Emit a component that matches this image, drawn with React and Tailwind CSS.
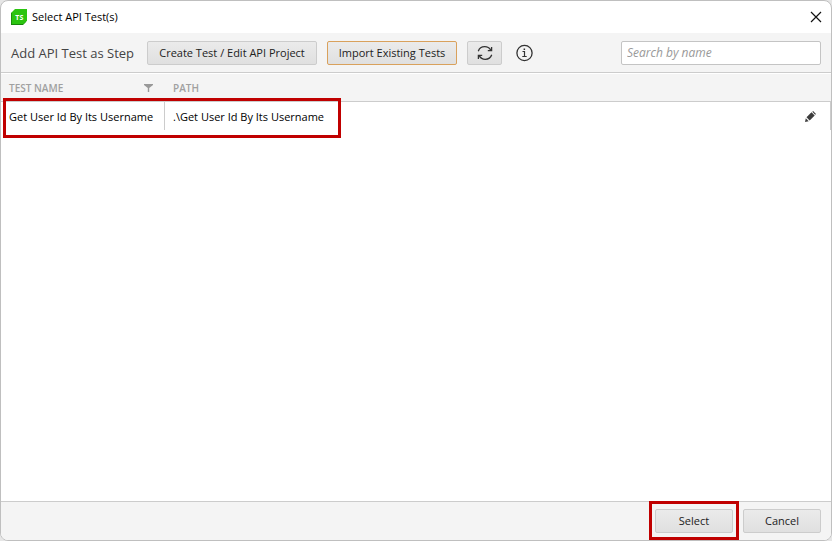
const buttonBase =
  "flex h-6 items-center justify-center whitespace-nowrap rounded-xs border bg-linear-to-b from-[#ebebeb] to-[#e0e0e0] text-[11px] leading-4 text-[#222222]";

function Logo() {
  return (
    <svg className="size-4 shrink-0" viewBox="0 0 16 16" aria-hidden="true">
      <path d="M0 3.500V16h12l3.500-3.500Z" fill="#16860a" />
      <path d="M4 0H16v11.500L12.500 15H.8V3.200Z" fill="#2bc410" />
      <text x="8.300" y="10.500" textAnchor="middle" fontSize="7" fontWeight="700" fill="#ffffff" fontFamily="Open Sans, sans-serif">
        TS
      </text>
    </svg>
  );
}

function CloseIcon() {
  return (
    <svg className="size-3" viewBox="0 0 12 12" fill="none" stroke="#111111" strokeWidth="1.2" aria-hidden="true">
      <path d="M1 1l10 10M11 1L1 11" />
    </svg>
  );
}

function RefreshIcon() {
  return (
    <svg className="size-4" viewBox="0 0 16 16" fill="none" stroke="#333333" strokeWidth="1.3" aria-hidden="true">
      <path d="M1.300 6.200C2.200 3.400 4.800 1.700 7.800 1.700c2.500 0 4.700 1.300 5.900 3.400" />
      <path d="M14.700 9.800C13.800 12.600 11.200 14.300 8.200 14.300c-2.500 0-4.700-1.300-5.900-3.400" />
      <path d="M14.600 2v3.600h-3.800M1.400 14v-3.600h3.800" />
    </svg>
  );
}

function InfoIcon() {
  return (
    <svg className="size-[18px]" viewBox="0 0 18 18" fill="none" stroke="#333333" aria-hidden="true">
      <circle cx="8.500" cy="9" r="7.600" strokeWidth="1.300" />
      <path d="M6.500 7.500h2v5M6.300 12.500h4.400" strokeWidth="1.200" />
      <path d="M7.600 4.400h1.500v1.500H7.600z" fill="#333333" stroke="none" />
    </svg>
  );
}

function FilterIcon() {
  return (
    <svg className="h-2 w-[9px]" viewBox="0 0 9 8" fill="#999999" aria-hidden="true">
      <path d="M0 0h9v1L5.200 4V8H3.800V4L0 1Z" />
    </svg>
  );
}

function PencilIcon() {
  return (
    <svg className="size-[11px]" viewBox="0 0 11 11" fill="#3c3c3c" aria-hidden="true">
      <path d="M7.300 0.800 8.100 0 11 2.900l-.8.8Z" />
      <path d="M6.500 1.300 9.700 4.500 4.700 9.500 1.500 6.300Z" />
      <path d="M.8 7.300 3.700 10.200 0 11Z" />
    </svg>
  );
}

export default function App() {
  return (
    <div className="flex min-h-screen bg-[#e6e6e6] font-['Open_Sans','Noto_Sans',sans-serif]">
      <main className="flex flex-1 flex-col overflow-hidden rounded-lg border border-[#bfbfbf] bg-white">
        <header className="flex h-8 items-center justify-between pr-[9px] pl-2.5">
          <h1 className="flex items-center gap-[5px] text-[11px] leading-4 text-black">
            <Logo />
            Select API Test(s)
          </h1>
          <button type="button" aria-label="Close">
            <CloseIcon />
          </button>
        </header>

        <div className="flex h-10 items-center border-b border-[#cccccc] bg-[#f4f4f4] px-2.5">
          <h2 className="w-[136px] shrink-0 whitespace-nowrap text-[13px] leading-5 text-[#444444]">Add API Test as Step</h2>
          <button type="button" className={`${buttonBase} w-[170px] border-[#cccccc]`}>
            Create Test / Edit API Project
          </button>
          <button type="button" className={`${buttonBase} ml-2.5 w-[130px] border-[#d9a15c]`}>
            Import Existing Tests
          </button>
          <button type="button" aria-label="Refresh" className={`${buttonBase} ml-2.5 w-[35px] border-[#cccccc]`}>
            <RefreshIcon />
          </button>
          <button type="button" aria-label="Information" className="ml-3.5">
            <InfoIcon />
          </button>
          <input
            type="text"
            aria-label="Search by name"
            placeholder="Search by name"
            className="ml-auto h-6 w-[200px] rounded-xs border border-[#c4c4c4] bg-white px-[5px] text-[12px] leading-4 placeholder:text-[#999999] placeholder:italic"
          />
        </div>

        <div className="relative mt-px flex-1">
          <table className="w-full table-fixed border-separate border-spacing-0 text-left text-[11px] leading-4">
            <thead className="text-[10px] text-[#a0a0a0]">
              <tr className="h-7 bg-[#f4f4f4]">
                <th className="w-[164px] border-b border-[#cccccc] px-2 py-0 font-semibold">
                  <span className="flex items-center justify-between pr-1">
                    TEST NAME
                    <FilterIcon />
                  </span>
                </th>
                <th className="border-b border-[#cccccc] px-2 py-0 font-semibold">PATH</th>
                <th className="w-[30px] border-b border-[#cccccc] p-0" aria-label="Actions" />
              </tr>
            </thead>
            <tbody className="text-black">
              <tr className="h-7">
                <td className="whitespace-nowrap border-r border-[#cccccc] pt-0.5 pb-0 pl-2">Get User Id By Its Username</td>
                <td className="px-2 pt-0.5 pb-0">.\Get User Id By Its Username</td>
                <td className="border-r border-[#cccccc] p-0">
                  <button type="button" aria-label="Edit test" className="ml-1 flex">
                    <PencilIcon />
                  </button>
                </td>
              </tr>
            </tbody>
          </table>
          <div className="pointer-events-none absolute top-6 left-0.5 h-10 w-[338px] border-3 border-[#c00000]" />
        </div>

        <footer className="flex h-[39px] items-center justify-end gap-2.5 border-t border-[#cccccc] bg-[#f4f4f4] px-2.5">
          <div className="relative">
            <button type="button" className={`${buttonBase} w-[78px] border-[#cccccc]`}>
              Select
            </button>
            <div className="pointer-events-none absolute -inset-x-1.5 -top-2 -bottom-[7px] border-3 border-[#c00000]" />
          </div>
          <button type="button" className={`${buttonBase} w-[78px] border-[#cccccc]`}>
            Cancel
          </button>
        </footer>
      </main>
    </div>
  );
}
